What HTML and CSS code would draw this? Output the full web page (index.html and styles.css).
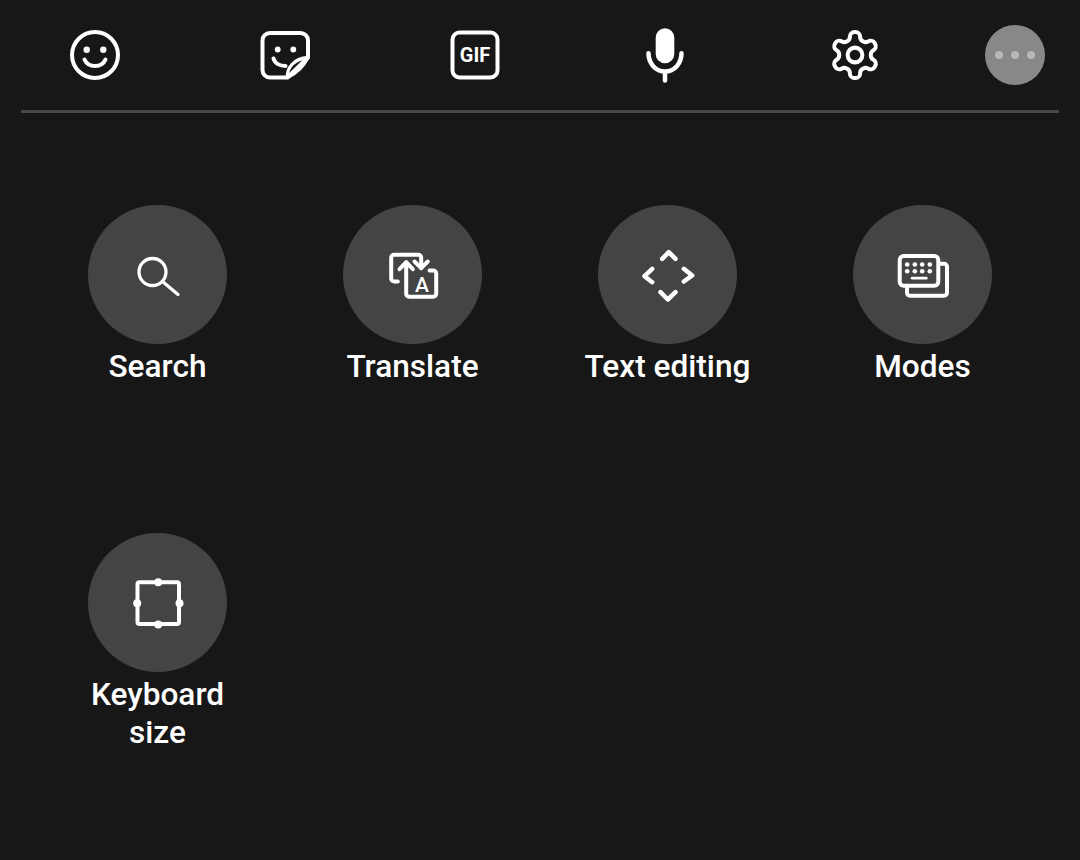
FILE: index.html
```html
<!DOCTYPE html>
<html lang="en">
<head>
  <meta charset="UTF-8" />
  <meta name="viewport" content="width=device-width, initial-scale=1.0" />
  <title>Keyboard Toolbar</title>
  <link rel="stylesheet" href="styles.css">
</head>
<body>
  <!-- Top toolbar -->
  <div class="toolbar">
    <div class="tool">
      <svg class="icon" viewBox="0 0 50 50">
        <circle cx="25" cy="25" r="23" />
        <circle class="solid" cx="16.700" cy="19.800" r="3.200" />
        <circle class="solid" cx="33.300" cy="19.800" r="3.200" />
        <path d="M14.500 29.500c2 4.500 6 6.500 10.500 6.500s8.500-2 10.500-6.500" />
      </svg>
    </div>
    <div class="tool">
      <svg class="icon" viewBox="0 0 50 50">
        <path d="M27.500 47.500H10a7.500 7.500 0 0 1-7.500-7.500V10.500A7.500 7.500 0 0 1 10 3h30.500a7.500 7.500 0 0 1 7.500 7.500V27.500z" />
        <path class="mid" d="M27.500 47.500c-1-9 6-19 20.500-20-4 8-12 16-20.500 20z" />
        <circle class="solid" cx="17.700" cy="19.500" r="2.900" />
        <circle class="solid" cx="33.300" cy="19.500" r="2.900" />
        <path d="M13.500 28.500c1.500 5 6.500 7.500 12 7.500" />
      </svg>
    </div>
    <div class="tool">
      <svg class="icon" viewBox="0 0 50 50">
        <rect x="2.500" y="2.500" width="45" height="45" rx="7" />
        <text class="gif-text" x="25" y="31.500">GIF</text>
      </svg>
    </div>
    <div class="tool">
      <svg class="icon" viewBox="0 0 50 50">
        <rect class="solid" x="15.700" y="-1.700" width="18.600" height="35" rx="9.300" />
        <path class="thick" d="M8.500 23.300c0 10 7 18.200 16.500 18.200s16.500-8.200 16.500-18.200M25 41.500v9" />
      </svg>
    </div>
    <div class="tool">
      <svg class="icon" viewBox="1.150 1.150 21.700 21.700">
        <path class="gear" d="M12.220 2h-.44a2 2 0 0 0-2 2v.18a2 2 0 0 1-1 1.730l-.43.25a2 2 0 0 1-2 0l-.15-.08a2 2 0 0 0-2.730.73l-.22.38a2 2 0 0 0 .73 2.730l.15.1a2 2 0 0 1 1 1.720v.51a2 2 0 0 1-1 1.740l-.15.09a2 2 0 0 0-.73 2.730l.22.38a2 2 0 0 0 2.730.73l.15-.08a2 2 0 0 1 2 0l.43.25a2 2 0 0 1 1 1.730V20a2 2 0 0 0 2 2h.44a2 2 0 0 0 2-2v-.18a2 2 0 0 1 1-1.730l.43-.25a2 2 0 0 1 2 0l.15.08a2 2 0 0 0 2.730-.73l.22-.39a2 2 0 0 0-.73-2.730l-.15-.08a2 2 0 0 1-1-1.740v-.5a2 2 0 0 1 1-1.740l.15-.09a2 2 0 0 0 .73-2.730l-.22-.38a2 2 0 0 0-2.730-.73l-.15.08a2 2 0 0 1-2 0l-.43-.25a2 2 0 0 1-1-1.730V4a2 2 0 0 0-2-2z" />
        <circle class="gear" cx="12" cy="12" r="3.200" />
      </svg>
    </div>
    <div class="more">
      <span class="dot"></span>
      <span class="dot"></span>
      <span class="dot"></span>
    </div>
  </div>
  <div class="divider"></div>

  <!-- Feature grid -->
  <div class="feature-grid">
    <div class="feature">
      <div class="round-btn">
        <svg class="icon" viewBox="0 0 50 50">
          <circle class="mid" cx="19.500" cy="22" r="13.500" />
          <path class="mid" d="M29.500 31.500L45 44.500" />
        </svg>
      </div>
      <span class="label">Search</span>
    </div>
    <div class="feature">
      <div class="round-btn">
        <svg class="icon" viewBox="0 0 50 50">
          <path d="M9.800 31.500H6.200a3 3 0 0 1-3-3V7.800a3 3 0 0 1 3-3h24a3 3 0 0 1 3 3v10.400" />
          <path d="M26.500 11.500l6.700 6.700 6.600-6.700" />
          <path d="M11.500 19.200l6.700-7 6.600 7M18.200 13v30.700a3 3 0 0 0 3 3h24a3 3 0 0 0 3-3V23.500a3 3 0 0 0-3-3h-3.700" />
          <text class="a-text" x="34" y="41.500">A</text>
        </svg>
      </div>
      <span class="label">Translate</span>
    </div>
    <div class="feature">
      <div class="round-btn">
        <svg class="icon" viewBox="0 0 50 50">
          <path class="thick" d="M19.200 8.800l6.600-6.600 6.700 6.600M17.500 42.200l7.300 7.300 7.700-7.300M9.200 18.800l-7.700 7.400 7.700 6M40.800 18.800l8.400 6.700-8.400 6" />
        </svg>
      </div>
      <span class="label">Text editing</span>
    </div>
    <div class="feature">
      <div class="round-btn">
        <svg class="icon" viewBox="0 0 50 50">
          <rect x="1.700" y="6" width="38.600" height="29.700" rx="4" />
          <path d="M41.800 13.800H46a3 3 0 0 1 3 3v26a3 3 0 0 1-3 3H12a3 3 0 0 1-3-3v-7" />
          <g class="solid">
            <circle cx="9.200" cy="14.500" r="2.300" /><circle cx="16.800" cy="14.500" r="2.300" />
            <circle cx="24.200" cy="14.500" r="2.300" /><circle cx="31.800" cy="14.500" r="2.300" />
            <circle cx="9.200" cy="21.200" r="2.300" /><circle cx="16.800" cy="21.200" r="2.300" />
            <circle cx="24.200" cy="21.200" r="2.300" /><circle cx="31.800" cy="21.200" r="2.300" />
          </g>
          <path class="thin" d="M14.200 28.200h14" />
        </svg>
      </div>
      <span class="label">Modes</span>
    </div>
    <div class="feature">
      <div class="round-btn">
        <svg class="icon" viewBox="0 0 50 50">
          <rect x="4.500" y="4.200" width="41.500" height="41.800" rx="2" />
          <g class="solid">
            <circle cx="25.200" cy="4.200" r="4" /><circle cx="25.200" cy="46.500" r="4" />
            <circle cx="4.200" cy="25.200" r="4" /><circle cx="46.500" cy="25.200" r="4" />
          </g>
        </svg>
      </div>
      <span class="label">Keyboard<br>size</span>
    </div>
  </div>
</body>
</html>
```

FILE: styles.css
```css
* {
  box-sizing: border-box;
}

body {
  margin: 0;
  min-height: 100vh;
  background: #171717;
  color: #fff;
  font-family: Roboto, sans-serif;
}

.toolbar {
  display: flex;
  align-items: center;
  height: 110px;
}

.tool {
  width: 190px;
  display: flex;
  justify-content: center;
}

.icon {
  display: block;
  width: 50px;
  height: 50px;
  overflow: visible;
  fill: none;
  stroke: #fff;
  stroke-width: 4;
  stroke-linecap: round;
  stroke-linejoin: round;
}

.icon .solid {
  fill: #fff;
  stroke: none;
}

.icon .thick {
  stroke-width: 4.500;
}

.icon .mid {
  stroke-width: 3.300;
}

.icon .thin {
  stroke-width: 2.800;
}

.icon .gear {
  stroke-width: 1.740;
}

.gif-text {
  fill: #fff;
  stroke: none;
  font-size: 20px;
  font-weight: 700;
  text-anchor: middle;
}

.a-text {
  fill: #fff;
  stroke: none;
  font-size: 21px;
  font-weight: 500;
  text-anchor: middle;
}

.more {
  width: 60px;
  height: 60px;
  margin-left: 35px;
  border-radius: 50%;
  background: #888;
  display: flex;
  justify-content: center;
  align-items: center;
  gap: 8px;
}

.dot {
  width: 8px;
  height: 8px;
  border-radius: 50%;
  background: #b8b8b8;
}

.divider {
  height: 3px;
  margin: 0 21px;
  background: #484848;
}

.feature-grid {
  display: grid;
  grid-template-columns: repeat(4, 255px);
  grid-auto-rows: 328px;
  padding: 92px 30px 0;
}

.feature {
  display: flex;
  flex-direction: column;
  align-items: center;
}

.round-btn {
  width: 139px;
  height: 139px;
  border-radius: 50%;
  background: #444;
  display: flex;
  justify-content: center;
  align-items: center;
}

.label {
  margin-top: 4px;
  font-size: 31.600px;
  font-weight: 500;
  line-height: 38px;
  text-align: center;
}
```
